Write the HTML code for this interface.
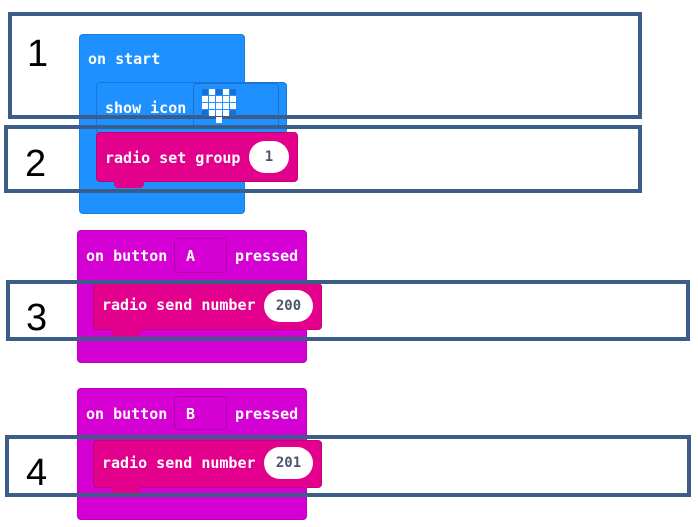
<!DOCTYPE html>
<html><head><meta charset="utf-8"><style>
body{margin:0;width:698px;height:527px;background:#fff;position:relative;overflow:hidden;font-family:"DejaVu Sans Mono","Liberation Mono",monospace;}
div{position:absolute;box-sizing:border-box}
.t{color:#fff;font-weight:bold;font-size:15px;white-space:nowrap;line-height:16px}
.box{border:4px solid #3d5d89}
.num{font-family:"Liberation Sans",sans-serif;font-size:38px;color:#000;line-height:38px}
.pill{background:#fff;border-radius:16px;color:#4a5668;font-weight:bold;font-size:14px;text-align:center;line-height:32px}
</style></head><body>
<div style="left:79px;top:34px;width:166px;height:180px;background:#1e90ff;border-radius:4px;border:1px solid #1b7fe0"></div>
<div class="t" style="left:88px;top:51px">on start</div>
<div style="left:96px;top:82px;width:191px;height:52px;background:#1e90ff;border:1px solid #1976d6;border-radius:4px"></div>
<div class="t" style="left:105px;top:100px">show icon</div>
<div style="left:193px;top:83px;width:86px;height:46px;border:1px solid #1a72d0;border-radius:4px"></div>
<div style="left:96px;top:132px;width:202px;height:50px;background:#e3008c;border-radius:4px;border:1px solid #c4007a"></div>
<div style="left:114px;top:181px;width:30px;height:7px;background:#e3008c;border-radius:0 0 4px 4px"></div>
<div class="t" style="left:105px;top:150px">radio set group</div>
<div class="pill" style="left:249px;top:141px;width:40px;height:32px">1</div>

<div style="left:77px;top:230px;width:230px;height:133px;background:#d400d4;border-radius:4px;border:1px solid #b800b8"></div>
<div class="t" style="left:86px;top:248px">on button</div>
<div style="left:174px;top:238px;width:53px;height:35px;border:1px solid #b000b0;border-radius:4px"></div>
<div class="t" style="left:186px;top:248px">A</div>
<div class="t" style="left:235px;top:248px">pressed</div>
<div style="left:93px;top:283px;width:229px;height:47px;background:#e3008c;border-radius:4px;border:1px solid #c4007a"></div>
<div style="left:111px;top:329px;width:30px;height:7px;background:#e3008c;border-radius:0 0 4px 4px"></div>
<div class="t" style="left:102px;top:297px">radio send number</div>
<div class="pill" style="left:264px;top:290px;width:49px;height:32px">200</div>

<div style="left:77px;top:388px;width:230px;height:132px;background:#d400d4;border-radius:4px;border:1px solid #b800b8"></div>
<div class="t" style="left:86px;top:406px">on button</div>
<div style="left:174px;top:396px;width:53px;height:34px;border:1px solid #b000b0;border-radius:4px"></div>
<div class="t" style="left:186px;top:406px">B</div>
<div class="t" style="left:235px;top:406px">pressed</div>
<div style="left:93px;top:440px;width:229px;height:48px;background:#e3008c;border-radius:4px;border:1px solid #c4007a"></div>
<div style="left:111px;top:487px;width:30px;height:7px;background:#e3008c;border-radius:0 0 4px 4px"></div>
<div class="t" style="left:102px;top:455px">radio send number</div>
<div class="pill" style="left:264px;top:447px;width:49px;height:32px">201</div>

<div class="box" style="left:8px;top:12px;width:634px;height:107px"></div>
<div class="box" style="left:4px;top:125px;width:638px;height:68px"></div>
<div class="box" style="left:6px;top:280px;width:684px;height:61px"></div>
<div class="box" style="left:5px;top:435px;width:686px;height:62px"></div>
<div class="num" style="left:27px;top:35px">1</div>
<div class="num" style="left:25px;top:145px">2</div>
<div class="num" style="left:26px;top:299px">3</div>
<div class="num" style="left:26px;top:454px">4</div>

<svg style="position:absolute;left:202px;top:89px" width="36" height="36">
<g fill="#fff">
<rect x="7" y="0" width="6" height="6"/><rect x="21" y="0" width="6" height="6"/>
<rect x="0" y="7" width="6" height="6"/><rect x="7" y="7" width="6" height="6"/><rect x="14" y="7" width="6" height="6"/><rect x="21" y="7" width="6" height="6"/><rect x="28" y="7" width="6" height="6"/>
<rect x="0" y="14" width="6" height="6"/><rect x="7" y="14" width="6" height="6"/><rect x="14" y="14" width="6" height="6"/><rect x="21" y="14" width="6" height="6"/><rect x="28" y="14" width="6" height="6"/>
<rect x="7" y="21" width="6" height="6"/><rect x="14" y="21" width="6" height="6"/><rect x="21" y="21" width="6" height="6"/>
<rect x="14" y="28" width="6" height="6"/>
</g>
<g fill="#1a6fd0">
<rect x="0" y="0" width="6" height="6"/><rect x="14" y="0" width="6" height="6"/><rect x="28" y="0" width="6" height="6"/>
<rect x="0" y="21" width="6" height="6"/><rect x="28" y="21" width="6" height="6"/>
</g>
</svg>
</body></html>
